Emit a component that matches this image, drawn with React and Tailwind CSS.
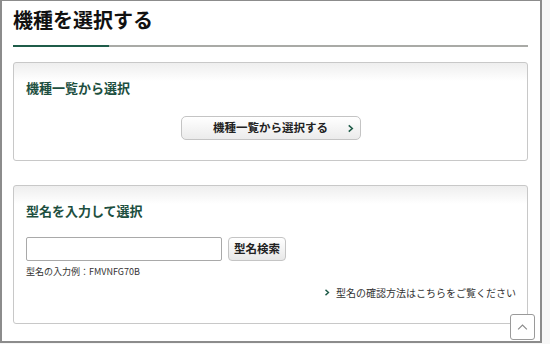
import React, { useState } from "react";

const jp = { fontFamily: '"Noto Sans CJK JP", "Noto Sans", sans-serif' };

const Chevron = ({ className = "" }) => (
  <svg viewBox="0 0 8 10" className={className} fill="none" stroke="currentColor" strokeWidth="1.8">
    <path d="M2 1.5 L6 5 L2 8.5" />
  </svg>
);

const Card = ({ title, children, className = "" }) => (
  <div
    className={`rounded-[3px] border border-[#c8c8c8] bg-gradient-to-b from-[#eeeeee] to-white bg-[length:100%_18px] bg-no-repeat bg-white ${className}`}
  >
    <h3 className="pl-3 pt-[16px] text-[13px] font-bold leading-[18px] text-[#1d4f40]">{title}</h3>
    {children}
  </div>
);

const App = () => {
  const [model, setModel] = useState("");

  return (
    <div className="flex h-[344px] w-[550px] bg-[#f7f7f7]" style={jp}>
      <div className="relative h-[343px] w-[542px] overflow-hidden border-b-2 border-l-2 border-r-2 border-t border-[#8c8c8c] bg-white">
        <div className="pl-[11px] pr-[12px]">
          <h2 className="pt-[6px] text-[20px] font-bold leading-[26px] text-[#111]">機種を選択する</h2>
          <div className="mt-[12px] flex h-[2px]">
            <div className="w-[96px] bg-[#1f5c49]" />
            <div className="flex-1 bg-[#a9aaa6]" />
          </div>

          <Card title="機種一覧から選択" className="mt-[15px] h-[99px]">
            <div className="mt-[19px] flex justify-center">
              <button className="relative flex h-[24px] w-[180px] items-center justify-center rounded-[5px] border border-[#c4c4c4] bg-gradient-to-b from-white to-[#ebebeb] text-[11.5px] font-bold text-[#222]">
                機種一覧から選択する
                <Chevron className="absolute right-[6px] top-[7px] h-[9px] w-[7px] text-[#1d5a47]" />
              </button>
            </div>
          </Card>

          <Card title="型名を入力して選択" className="mt-[24px] h-[139px]">
            <div className="mt-[17px] flex items-center gap-[6px] pl-3">
              <input
                value={model}
                onChange={(e) => setModel(e.target.value)}
                className="h-[24px] w-[196px] rounded-[2px] border border-[#a9a9a9] bg-white px-1 text-[12px] outline-none"
              />
              <button className="h-[24px] w-[58px] rounded-[4px] border border-[#c4c4c4] bg-gradient-to-b from-white to-[#e8e8e8] text-[11.5px] font-bold text-[#222]">
                型名検索
              </button>
            </div>
            <p className="mt-[5px] pl-3 text-[9px] leading-[12px] text-[#333]">型名の入力例：FMVNFG70B</p>
            <div className="mt-[7px] flex items-center justify-end gap-[6px] pr-[11px] text-[10px] text-[#333]">
              <Chevron className="h-[9px] w-[6px] text-[#1d5a47]" />
              <span>型名の確認方法はこちらをご覧ください</span>
            </div>
          </Card>
        </div>

        <button className="absolute left-[508px] top-[313px] flex h-[26px] w-[25px] items-center justify-center rounded-[3px] border border-[#9a9a9a] bg-white text-[#8a8a8a]">
          <svg viewBox="0 0 14 10" className="h-[8px] w-[13px]" fill="none" stroke="currentColor" strokeWidth="1.4">
            <path d="M1.5 8 L7 2.5 L12.5 8" />
          </svg>
        </button>
      </div>
    </div>
  );
};

export default App;
